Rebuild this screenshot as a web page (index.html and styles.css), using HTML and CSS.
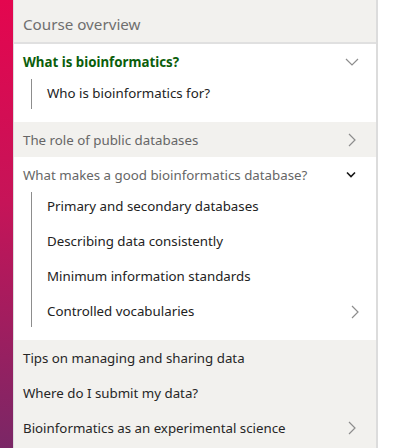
FILE: index.html
```html
<!DOCTYPE html>
<html lang="en">
<head>
    <meta charset="UTF-8">
    <meta name="viewport" content="width=device-width, initial-scale=1.0">
    <title>Course overview</title>
    <link rel="stylesheet" href="styles.css">
</head>
<body>
    <div class="layout">
        <div class="brand-strip"></div>

        <nav class="course-nav">
            <div class="nav-header">Course overview</div>

            <!-- Current section -->
            <div class="section">
                <div class="section-title current">
                    <span>What is bioinformatics?</span>
                    <svg class="chev chev-down" width="14" height="8" viewBox="0 0 14 8"><path d="M1 1l6 6 6-6" fill="none" stroke="#8d8d8d" stroke-width="1.2"/></svg>
                </div>
                <ul class="sub-list">
                    <li>Who is bioinformatics for?</li>
                </ul>
            </div>

            <div class="section shaded">
                <div class="section-title muted">
                    <span>The role of public databases</span>
                    <svg class="chev" width="8" height="14" viewBox="0 0 8 14"><path d="M1 1l6 6-6 6" fill="none" stroke="#8d8d8d" stroke-width="1.2"/></svg>
                </div>
            </div>

            <div class="section">
                <div class="section-title muted">
                    <span>What makes a good bioinformatics database?</span>
                    <svg class="chev chev-dark" width="10" height="7" viewBox="0 0 10 7"><path d="M1 1.5l4 4 4-4" fill="none" stroke="#161616" stroke-width="1.6"/></svg>
                </div>
                <ul class="sub-list">
                    <li>Primary and secondary databases</li>
                    <li>Describing data consistently</li>
                    <li>Minimum information standards</li>
                    <li>
                        <span>Controlled vocabularies</span>
                        <svg class="chev chev-sub" width="8" height="14" viewBox="0 0 8 14"><path d="M1 1l6 6-6 6" fill="none" stroke="#8d8d8d" stroke-width="1.2"/></svg>
                    </li>
                </ul>
            </div>

            <div class="section shaded rest">
                <div class="section-title">
                    <span>Tips on managing and sharing data</span>
                </div>
                <div class="section-title">
                    <span>Where do I submit my data?</span>
                </div>
                <div class="section-title">
                    <span>Bioinformatics as an experimental science</span>
                    <svg class="chev" width="8" height="14" viewBox="0 0 8 14"><path d="M1 1l6 6-6 6" fill="none" stroke="#8d8d8d" stroke-width="1.2"/></svg>
                </div>
            </div>
        </nav>
    </div>
</body>
</html>
```

FILE: styles.css
```css
body {
    margin: 0;
    padding: 0;
    font-family: "Noto Sans", Arial, sans-serif;
    background-color: #ffffff;
    color: #222;
}

.layout {
    display: flex;
    height: 448px;
    overflow: hidden;
}

.brand-strip {
    width: 13px;
    flex-shrink: 0;
    background: linear-gradient(to bottom, #e4064f 0%, #c61458 45%, #7a2766 100%);
}

.course-nav {
    width: 362px;
    flex-shrink: 0;
    border-left: 1px solid #dcdcdc;
    border-right: 2px solid #dcdcdc;
    background-color: #f2f1ee;
}

.nav-header {
    height: 42px;
    line-height: 48px;
    padding-left: 9px;
    font-size: 15.2px;
    color: #6f6f6f;
    background-color: #f2f1ee;
    border-bottom: 2px solid #e0e0e0;
}

.section {
    background-color: #ffffff;
    padding-bottom: 13px;
}

.section.shaded {
    background-color: #f2f1ee;
    padding-bottom: 0;
}

.section.rest {
    padding-bottom: 10px;
}

.section-title {
    display: flex;
    align-items: center;
    justify-content: space-between;
    height: 35px;
    padding: 0 19px 0 9px;
    font-size: 13.3px;
    color: #262626;
}

.section-title.current {
    color: #0b5e0b;
    font-weight: bold;
}

.section-title.muted {
    color: #666;
}

.chev {
    flex-shrink: 0;
    margin-right: 1px;
}

.chev-down {
    margin-right: -2px;
}

.chev-dark {
    margin-right: 1px;
}

.sub-list {
    list-style: none;
    margin: 0 0 0 17px;
    padding: 0;
    border-left: 1px solid #8d8d8d;
    display: flex;
    flex-direction: column;
    gap: 5px;
}

.sub-list li {
    display: flex;
    align-items: center;
    justify-content: space-between;
    height: 30px;
    padding: 0 16px 3px 15px;
    box-sizing: border-box;
    font-size: 13.3px;
    color: #222;
}

.sub-list li .chev-sub {
    margin-top: 3px;
}
```
